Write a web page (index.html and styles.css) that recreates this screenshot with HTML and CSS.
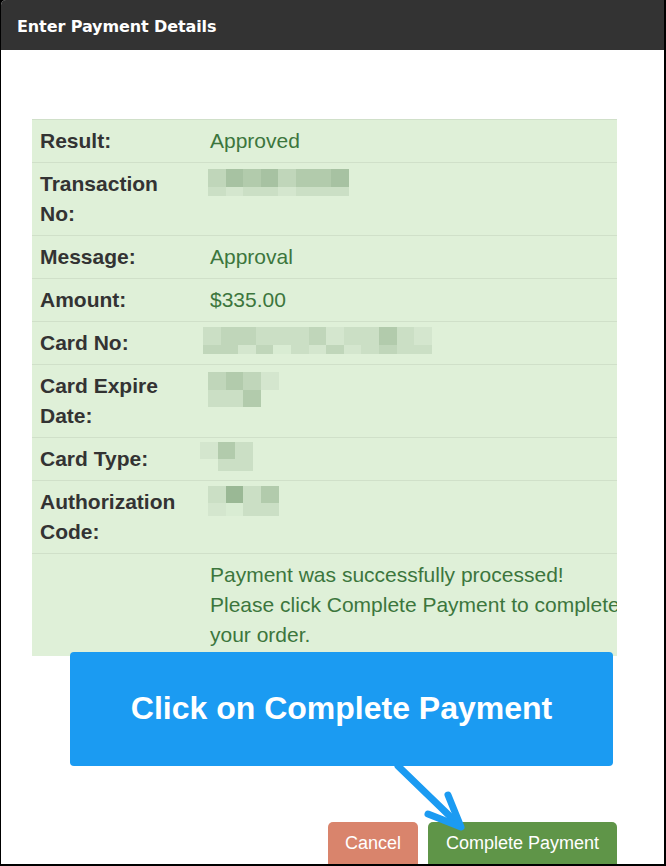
FILE: index.html
```html
<!DOCTYPE html>
<html>
<head>
<meta charset="utf-8">
<link rel="stylesheet" href="styles.css">
</head>
<body>
<div class="frame">
  <div class="panel">
    <div class="header">Enter Payment Details</div>
    <div class="content">
      <div class="table-wrap">
        <table class="result">
          <tr><th>Result:</th><td>Approved</td></tr>
          <tr><th>Transaction No:</th><td>
            <div class="mosaic c8 t-trans">
              <i class="s3"></i><i class="s5"></i><i class="s4"></i><i class="s5"></i><i class="s3"></i><i class="s4"></i><i class="s4"></i><i class="s5"></i>
              <i class="s2 h9"></i><i class="s1 h9"></i><i class="s2 h9"></i><i class="s2 h9"></i><i class="s1 h9"></i><i class="s2 h9"></i><i class="s2 h9"></i><i class="s2 h9"></i>
            </div>
          </td></tr>
          <tr><th>Message:</th><td>Approval</td></tr>
          <tr><th>Amount:</th><td>$335.00</td></tr>
          <tr><th>Card No:</th><td>
            <div class="mosaic c13 t-card">
              <i class="s2"></i><i class="s3"></i><i class="s3"></i><i class="s2"></i><i class="s2"></i><i class="s2"></i><i class="s3"></i><i class="s1"></i><i class="s2"></i><i class="s2"></i><i class="s4"></i><i class="s2"></i><i class="s1"></i>
              <i class="s3 h9"></i><i class="s3 h9"></i><i class="s1 h9"></i><i class="s3 h9"></i><i class="s0 h9"></i><i class="s2 h9"></i><i class="s1 h9"></i><i class="s3 h9"></i><i class="s1 h9"></i><i class="s2 h9"></i><i class="s3 h9"></i><i class="s2 h9"></i><i class="s2 h9"></i>
            </div>
          </td></tr>
          <tr><th>Card Expire Date:</th><td>
            <div class="mosaic c4 t-exp">
              <i class="s3"></i><i class="s4"></i><i class="s3"></i><i class="s1"></i>
              <i class="s2 h17"></i><i class="s2 h17"></i><i class="s4 h17"></i><i class="sx h17"></i>
            </div>
          </td></tr>
          <tr><th>Card Type:</th><td>
            <div class="mosaic c3 t-type">
              <i class="s1 h17"></i><i class="s4 h17"></i><i class="s2 h17"></i>
              <i class="sx h12"></i><i class="s2 h12"></i><i class="s2 h12"></i>
            </div>
          </td></tr>
          <tr><th>Authorization Code:</th><td>
            <div class="mosaic c4 t-auth">
              <i class="s2 h17"></i><i class="s6 h17"></i><i class="s2 h17"></i><i class="s4 h17"></i>
              <i class="s1 h13"></i><i class="s0 h13"></i><i class="s2 h13"></i><i class="s2 h13"></i>
            </div>
          </td></tr>
          <tr><th></th><td>Payment was successfully processed!<br>Please click Complete Payment to complete your order.</td></tr>
        </table>
      </div>
      <div class="actions">
        <button class="btn btn-cancel">Cancel</button>
        <button class="btn btn-complete">Complete Payment</button>
      </div>
    </div>
  </div>
  <div class="callout">Click on Complete Payment</div>
  <svg class="arrow" width="120" height="90" viewBox="380 755 120 90">
    <path d="M398 766 L459 825" fill="none" stroke="#1b9bf2" stroke-width="7" stroke-linecap="round"/>
    <path d="M448 795 L461 827 L428 814" fill="none" stroke="#1b9bf2" stroke-width="7" stroke-linecap="round" stroke-linejoin="round"/>
  </svg>
</div>
</body>
</html>
```

FILE: styles.css
```css
html, body {
  margin: 0;
  padding: 0;
  background: #fff;
}

.frame {
  position: relative;
  width: 666px;
  height: 866px;
  box-sizing: border-box;
  background: #000;
  padding: 0 2px 2px 1px;
  overflow: hidden;
}

.panel {
  height: 100%;
  background: #fff;
  display: flex;
  flex-direction: column;
  overflow: hidden;
  border-top-left-radius: 5px;
}

.header {
  height: 50px;
  flex: none;
  box-sizing: border-box;
  background: #333333;
  color: #fff;
  font-family: "DejaVu Sans", Verdana, sans-serif;
  font-weight: bold;
  font-size: 16px;
  line-height: 50px;
  padding-left: 16px;
  padding-top: 2px;
  letter-spacing: -0.1px;
}

.content {
  padding: 69px 46px 0 31px;
  display: flex;
  flex-direction: column;
}

.table-wrap {
  width: 585px;
  overflow: hidden;
  background: #dff0d8;
}

.result {
  width: 624px;
  border-collapse: collapse;
  font-family: "Liberation Sans", Arial, sans-serif;
  font-size: 21px;
  line-height: 30px;
}

.result tr {
  border-top: 1px solid #d0e0c9;
}

.result th,
.result td {
  padding: 6px 8px;
    vertical-align: top;
  text-align: left;
}

.result th {
  width: 154px;
  color: #333333;
  font-weight: bold;
}

.result td {
  color: #3c763d;
}

.mosaic {
  display: grid;
  align-items: start;
}

.mosaic i {
  display: block;
  height: 18px;
}

.mosaic i.h9 { height: 9px; }
.mosaic i.h12 { height: 12px; }
.mosaic i.h13 { height: 13px; }
.mosaic i.h17 { height: 17px; }

.c3 { grid-template-columns: repeat(3, 17.5px); }
.c4 { grid-template-columns: repeat(4, 17.7px); }
.c8 { grid-template-columns: repeat(8, 17.6px); }
.c13 { grid-template-columns: repeat(13, 17.6px); }

.t-trans { margin-left: -2px; }
.t-card { margin-left: -7px; margin-top: -1px; }
.t-exp { margin-left: -2px; margin-top: 1px; }
.t-type { margin-left: -10px; margin-top: -2px; }
.t-auth { margin-left: -2px; margin-top: -1px; }

.sx { background: transparent; }
.s0 { background: #d9ecd3; }
.s1 { background: #d4e6ce; }
.s2 { background: #cbdfc5; }
.s3 { background: #c0d6ba; }
.s4 { background: #b2cbac; }
.s5 { background: #a7c2a2; }
.s6 { background: #9ab895; }

.actions {
  margin-top: 166px;
  display: flex;
  justify-content: flex-end;
  gap: 10px;
  width: 585px;
}

.btn {
  border: none;
  border-radius: 5px;
  color: #fff;
  font-family: "Liberation Sans", Arial, sans-serif;
  font-size: 18px;
  height: 46px;
  padding: 0 18px 4px;
  line-height: 42px;
}

.btn-cancel {
  background: #d9846c;
  width: 90px;
  padding: 0 0 4px;
}

.btn-complete {
  background: #5f9548;
}

.callout {
  position: absolute;
  left: 70px;
  top: 652px;
  width: 543px;
  height: 114px;
  background: #1b9bf2;
  border-radius: 4px;
  color: #fff;
  font-family: "Liberation Sans", Arial, sans-serif;
  font-weight: bold;
  font-size: 32px;
  display: flex;
  align-items: center;
  justify-content: center;
  padding-bottom: 2px;
  box-sizing: border-box;
}

.arrow {
  position: absolute;
  left: 380px;
  top: 755px;
}
```
